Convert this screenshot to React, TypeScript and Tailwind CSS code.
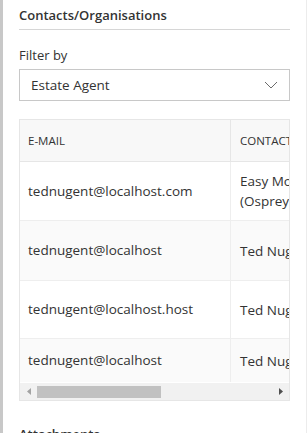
import React from "react";

const rows = [
  { email: "tednugent@localhost.com", contact: ["Easy Moves", "(Osprey)"], h: "h-[59px]", bg: "bg-white" },
  { email: "tednugent@localhost", contact: ["Ted Nugent"], h: "h-[60px]", bg: "bg-[#fafafa]" },
  { email: "tednugent@localhost.host", contact: ["Ted Nugent"], h: "h-[58px]", bg: "bg-white" },
  { email: "tednugent@localhost", contact: ["Ted Nugent"], h: "h-[43px]", bg: "bg-[#fafafa]" },
];

export default function App() {
  return (
    <div
      className="flex w-[308px] h-[433px] overflow-hidden bg-white text-[#333333]"
      style={{ fontFamily: '"Open Sans", "Noto Sans", sans-serif' }}
    >
      <div className="w-[3px] shrink-0 bg-[#c8c8c8]" />
      <div className="flex-1 min-w-0 flex flex-col pl-[16px] pr-[16px] pt-[5px] overflow-hidden">
        <div className="shrink-0 h-[25px] border-b border-[#d6d6d6] text-[13px] leading-[20px] font-semibold">
          Contacts/Organisations
        </div>
        <div className="shrink-0 mt-[15px] text-[13px] leading-[20px]">Filter by</div>
        <div className="shrink-0 mt-[4px] h-[32px] border border-[#c8c8c8] flex items-center justify-between pl-[11px] pr-[11px]">
          <span className="text-[13.5px]">Estate Agent</span>
          <svg width="14" height="8" viewBox="0 0 14 8" className="text-[#6b6b6b]">
            <path d="M1 1 L7 7 L13 1" fill="none" stroke="currentColor" strokeWidth="1" />
          </svg>
        </div>
        <div className="mt-[18px] h-[282px] border border-[#e6e6e6] flex flex-col overflow-hidden shrink-0">
          <div className="flex-1 min-h-0 overflow-hidden">
            <div className="w-[400px]">
              <div className="flex h-[42px] bg-[#f8f8f8] border-b border-[#e6e6e6] text-[11.5px]">
                <div className="w-[211px] shrink-0 border-r border-[#e6e6e6] flex items-center pl-[8px]">E-MAIL</div>
                <div className="flex-1 flex items-center pl-[9px]">CONTACT NAME</div>
              </div>
              {rows.map((r, i) => (
                <div key={i} className={`flex ${r.h} ${r.bg} ${i < rows.length - 1 ? "border-b" : ""} border-[#eeeeee] text-[13.5px]`}>
                  <div className="w-[211px] shrink-0 border-r border-[#eeeeee] flex items-center pl-[8px]">
                    {r.email}
                  </div>
                  <div className="flex-1 flex flex-col justify-center pl-[9px] leading-[20px]">
                    {r.contact.map((c, j) => (
                      <div key={j} className="whitespace-nowrap">{c}</div>
                    ))}
                  </div>
                </div>
              ))}
            </div>
          </div>
          <div className="h-[17px] shrink-0 bg-[#f1f1f1] flex items-center">
            <div className="w-[17px] flex items-center justify-center">
              <svg width="4" height="7" viewBox="0 0 4 7">
                <path d="M4 0 L0 3.5 L4 7 Z" fill="#a3a3a3" />
              </svg>
            </div>
            <div className="w-[124px] h-[12px] bg-[#c1c1c1]" />
            <div className="flex-1" />
            <div className="w-[17px] flex items-center justify-center">
              <svg width="4" height="7" viewBox="0 0 4 7">
                <path d="M0 0 L4 3.5 L0 7 Z" fill="#505050" />
              </svg>
            </div>
          </div>
        </div>
        <div className="shrink-0 mt-[23px] text-[13px] leading-[20px] font-semibold">Attachments</div>
      </div>
      <div className="w-[1px] shrink-0 bg-[#ececec]" />
      <div className="w-[1px] shrink-0 bg-white" />
    </div>
  );
}
